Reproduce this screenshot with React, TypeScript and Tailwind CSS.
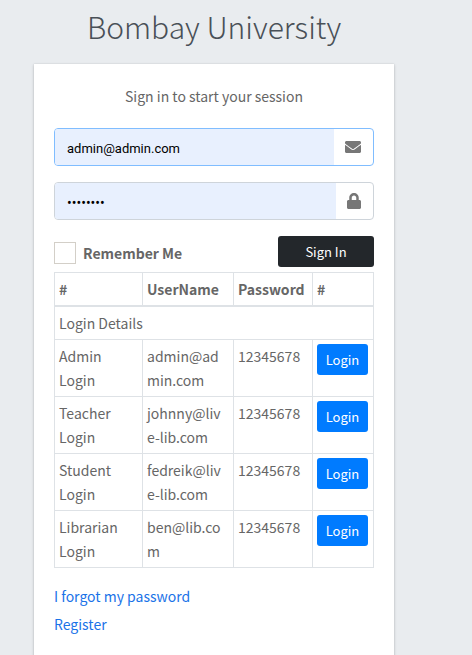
import { useState } from "react"
import type { FormEvent } from "react"
import { FaEnvelope, FaLock } from "react-icons/fa"

interface Account {
    role: string
    email: string
    password: string
}

const accounts: Account[] = [
    { role: "Admin Login", email: "admin@admin.com", password: "12345678" },
    { role: "Teacher Login", email: "johnny@live-lib.com", password: "12345678" },
    { role: "Student Login", email: "fedreik@live-lib.com", password: "12345678" },
    { role: "Librarian Login", email: "ben@lib.com", password: "12345678" },
]

const App = () => {
    const [email, setEmail] = useState("admin@admin.com")
    const [password, setPassword] = useState("12345678")
    const [remember, setRemember] = useState(false)

    const fillAccount = (account: Account) => {
        setEmail(account.email)
        setPassword(account.password)
    }

    const handleSubmit = (e: FormEvent) => {
        e.preventDefault()
    }

    return (
        <div className="min-h-screen overflow-hidden bg-[#e9ecef] pl-[34px] pr-4 font-['Noto_Sans_CJK_SC',sans-serif] text-[14px] leading-6 text-[#666]">
            <div className="w-full max-w-[360px]">
                <h1 className="pb-3 text-center font-['Noto_Sans_CJK_SC_Light','Noto_Sans_CJK_SC_DemiLight','Noto_Sans_CJK_SC',sans-serif] text-[30px] leading-[52px] font-light text-[#495057]">Bombay University</h1>

                <div className="bg-white px-5 pt-5 pb-8 shadow-[0_0_1px_rgba(0,0,0,0.13),0_1px_3px_rgba(0,0,0,0.2)]">
                    <p className="pb-5 text-center">Sign in to start your session</p>

                    <form onSubmit={handleSubmit}>
                        <div className="mb-4 flex h-[38px] overflow-hidden rounded border border-[#80bdff]">
                            <input
                                type="email"
                                aria-label="Email"
                                value={email}
                                onChange={(e) => setEmail(e.target.value)}
                                className="min-w-0 flex-1 bg-[#e8f0fe] px-3 pt-[3px] font-[Roboto,sans-serif] text-[13px] text-black outline-none"
                            />
                            <span className="flex items-center pr-3 pl-[11px] text-[16px] text-[#777]">
                                <FaEnvelope />
                            </span>
                        </div>

                        <div className="mb-4 flex h-[38px] overflow-hidden rounded border border-[#ced4da]">
                            <input
                                type="password"
                                aria-label="Password"
                                value={password}
                                onChange={(e) => setPassword(e.target.value)}
                                className="min-w-0 flex-1 bg-[#e8f0fe] px-3 pt-[3px] font-[Roboto,sans-serif] text-[14px] text-black outline-none"
                            />
                            <span className="flex items-center pr-3 pl-[11px] text-[16px] text-[#777]">
                                <FaLock className="w-[14px]" />
                            </span>
                        </div>

                        <div className="mb-[5px] flex items-center justify-between">
                            <label className="flex items-center gap-[7px] pt-[3px] font-bold">
                                <input
                                    type="checkbox"
                                    checked={remember}
                                    onChange={(e) => setRemember(e.target.checked)}
                                    className="size-[22px] appearance-none border border-[#d3cfc8] checked:bg-[#007bff]"
                                />
                                Remember Me
                            </label>
                            <button type="submit" className="h-[31px] w-24 rounded-[3px] bg-[#23272b] text-[13px] text-white">
                                Sign In
                            </button>
                        </div>
                    </form>

                    <table className="mb-4 w-full table-fixed border-collapse border border-[#dee2e6] text-left">
                        <colgroup>
                            <col className="w-[88px]" />
                            <col className="w-[91px]" />
                            <col className="w-[79px]" />
                            <col />
                        </colgroup>
                        <thead>
                            <tr className="border-b-2 border-[#dee2e6]">
                                <th className="border-x border-[#dee2e6] p-1">#</th>
                                <th className="border-x border-[#dee2e6] p-1">UserName</th>
                                <th className="border-x border-[#dee2e6] p-1">Password</th>
                                <th className="border-x border-[#dee2e6] p-1">#</th>
                            </tr>
                        </thead>
                        <tbody>
                            <tr>
                                <td className="p-1" colSpan={4}>Login Details</td>
                            </tr>
                            {accounts.map((account) => (
                                <tr key={account.email} className="align-top">
                                    <td className="border border-[#dee2e6] py-1 pr-6 pl-1">{account.role}</td>
                                    <td className="border border-[#dee2e6] py-1 pr-2 pl-1 break-all">{account.email}</td>
                                    <td className="border border-[#dee2e6] p-1">{account.password}</td>
                                    <td className="border border-[#dee2e6] p-1">
                                        <button
                                            type="button"
                                            onClick={() => fillAccount(account)}
                                            className="block h-[31px] w-[51px] rounded-[3px] bg-[#007bff] text-[13px] text-white"
                                        >
                                            Login
                                        </button>
                                    </td>
                                </tr>
                            ))}
                        </tbody>
                    </table>

                    <p className="mb-1"><a href="#forgot" className="text-[#1a73e8]">I forgot my password</a></p>
                    <p><a href="#register" className="text-[#1a73e8]">Register</a></p>
                </div>
            </div>
        </div>
    )
}

export default App
